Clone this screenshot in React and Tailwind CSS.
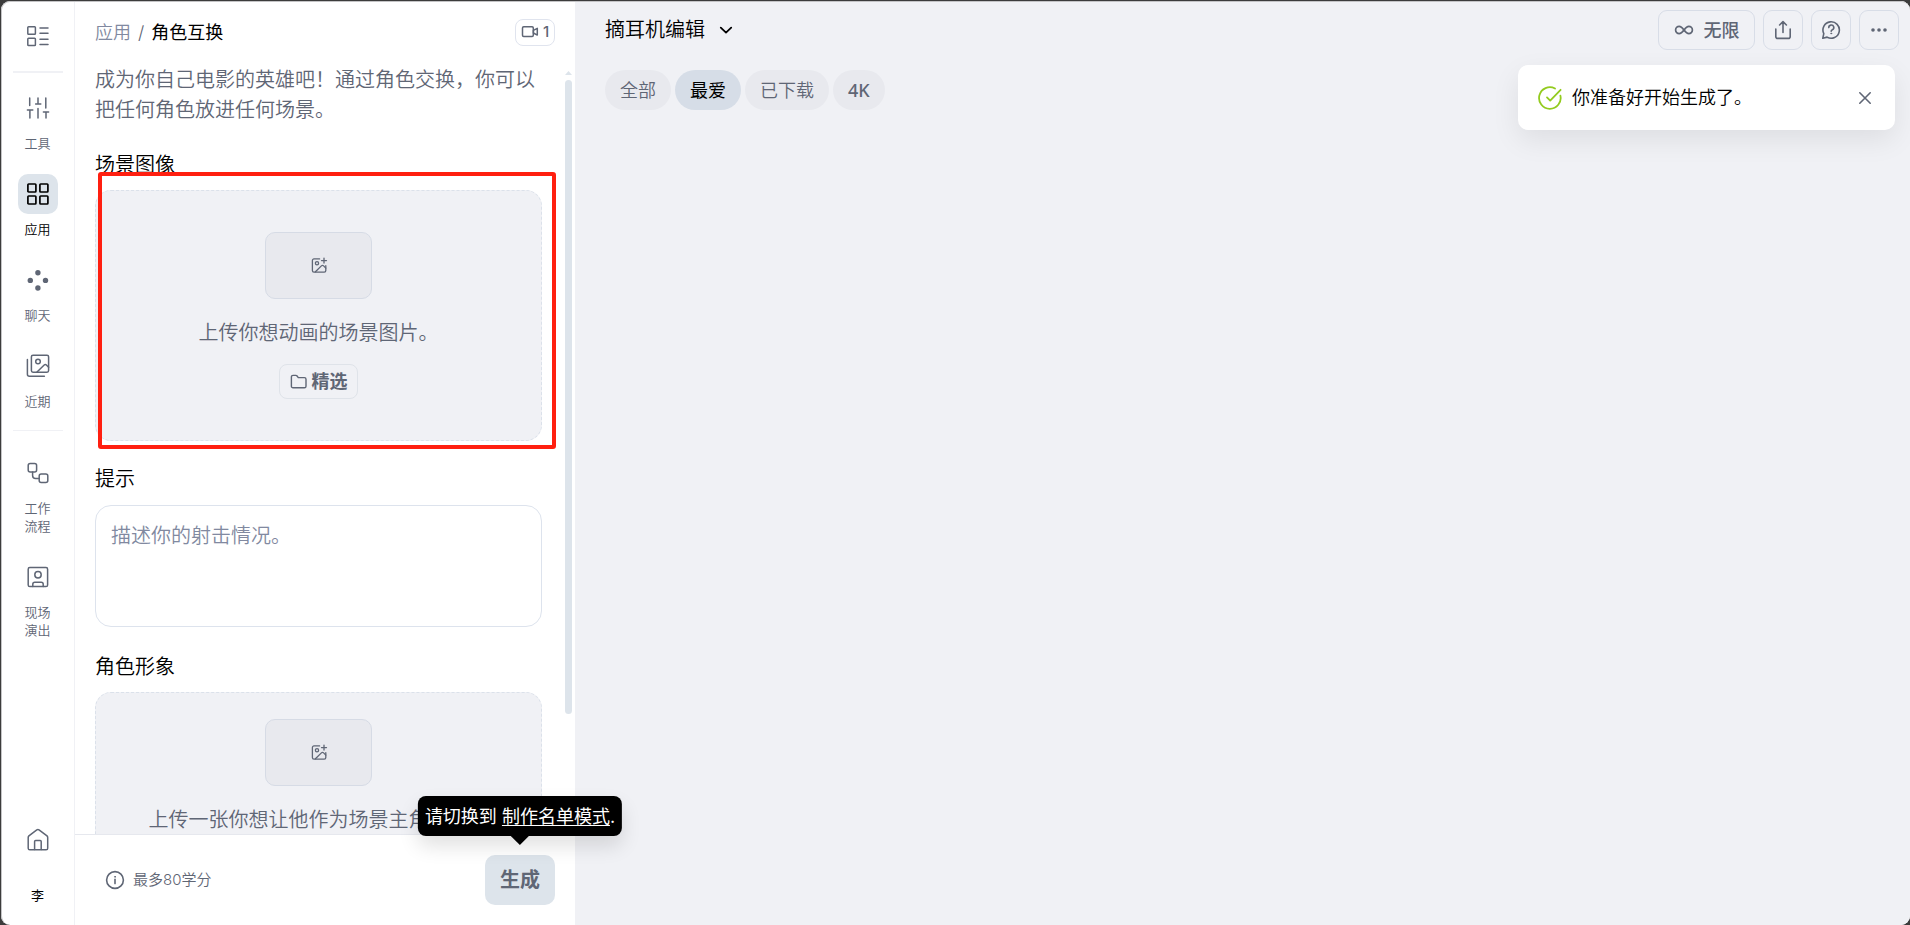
import React from "react";

function Icon({ size = 24, stroke = 1.5, className = "", children }) {
  return (
    <svg
      aria-hidden="true"
      width={size}
      height={size}
      viewBox={`0 0 ${size} ${size}`}
      fill="none"
      stroke="currentColor"
      strokeWidth={stroke}
      strokeLinecap="round"
      strokeLinejoin="round"
      className={`shrink-0 ${className}`}
    >
      {children}
    </svg>
  );
}

const ListIcon = () => (
  <Icon>
    <rect x="1.8" y="2.8" width="7.6" height="7.4" rx="0.8" />
    <rect x="1.8" y="14.2" width="7.6" height="7.4" rx="0.8" />
    <path d="M14 4h8M14 9.2h8M14 15.2h8M14 20.6h8" />
  </Icon>
);

const SlidersIcon = () => (
  <Icon>
    <path d="M3.7 2v7.6M12 2v5M19.8 2v10M9.6 8h5.2M1.4 14h5.4M3.9 14v8M12 12.6V22M17.4 16h5.2M20 16v6" />
  </Icon>
);

const AppsIcon = () => (
  <Icon stroke={1.7}>
    <rect x="1.9" y="2" width="8" height="8" rx="0.8" />
    <rect x="13.9" y="2" width="8" height="8" rx="0.8" />
    <rect x="1.9" y="14" width="8" height="8" rx="0.8" />
    <rect x="13.9" y="14" width="8" height="8" rx="0.8" />
  </Icon>
);

const ChatIcon = () => (
  <Icon stroke={0}>
    <g fill="currentColor">
      <circle cx="11.9" cy="4.8" r="2.7" />
      <circle cx="4.3" cy="12.4" r="2.7" />
      <circle cx="19.5" cy="12.4" r="2.7" />
      <circle cx="11.9" cy="20" r="2.7" />
    </g>
  </Icon>
);

const RecentIcon = () => (
  <Icon>
    <rect x="5.4" y="1.2" width="17.2" height="17" rx="1.6" />
    <circle cx="12" cy="7.5" r="2.3" />
    <path d="M11 18l7.2-7a1.6 1.6 0 0 1 2.2 0l2.2 2.2M1.4 5.6v14.6a2 2 0 0 0 2 2h15" />
  </Icon>
);

const WorkflowIcon = () => (
  <Icon>
    <rect x="2.2" y="2.4" width="8.4" height="8.6" rx="2" />
    <rect x="13.2" y="13" width="8.6" height="8.6" rx="2" />
    <path d="M6.6 11v3.6a3 3 0 0 0 3 3h3.6" />
  </Icon>
);

const LiveIcon = () => (
  <Icon>
    <rect x="2.2" y="2.6" width="19.4" height="19" rx="1.6" />
    <circle cx="12" cy="9.8" r="3.2" />
    <path d="M6.8 21.4v-2.2a2 2 0 0 1 2-2h6.4a2 2 0 0 1 2 2v2.2" />
  </Icon>
);

const HomeIcon = () => (
  <Icon>
    <path d="M2.2 9.4c0-.6.3-1.1.7-1.5l7.9-6a1.9 1.9 0 0 1 2.2 0l8 6c.4.4.7.9.7 1.5v10.8a1.6 1.6 0 0 1-1.6 1.6H3.8a1.6 1.6 0 0 1-1.6-1.6z" />
    <path d="M8.6 21.6v-8.2a1 1 0 0 1 1-1h4.6a1 1 0 0 1 1 1v8.2" />
  </Icon>
);

const VideoIcon = () => (
  <Icon size={18}>
    <rect x="1.5" y="3.8" width="10.8" height="9.6" rx="1.2" />
    <path d="M12.4 7.4l3.9-2.1v6.8l-3.9-2.1z" />
  </Icon>
);

const ImagePlusIcon = () => (
  <Icon size={18} stroke={1.3}>
    <path d="M9.6 1.9H4A1.6 1.6 0 0 0 2.4 3.5v10a1.6 1.6 0 0 0 1.6 1.6h10.2a1.6 1.6 0 0 0 1.6-1.6V8.7" />
    <circle cx="7" cy="6.2" r="1.6" />
    <path d="M5.4 14.7l6-5.8a1.6 1.6 0 0 1 2.2 0l2.2 2.2M14 1.1v5M11.5 3.6h5" />
  </Icon>
);

const FolderIcon = () => (
  <Icon size={18} stroke={1.4}>
    <path d="M1.4 4a1.6 1.6 0 0 1 1.6-1.6h2.8c.5 0 1 .2 1.3.6l1.2 1.6h6.1A1.6 1.6 0 0 1 16 6.2v7a1.6 1.6 0 0 1-1.6 1.6H3a1.6 1.6 0 0 1-1.6-1.6z" />
  </Icon>
);

const InfoIcon = () => (
  <Icon size={20} stroke={1.6}>
    <circle cx="10" cy="10" r="8.4" />
    <path d="M10 9.4v4.2" />
    <circle cx="10" cy="6.8" r="0.5" fill="currentColor" strokeWidth="0.8" />
  </Icon>
);

const InfinityIcon = () => (
  <Icon size={20} stroke={1.7}>
    <path d="M10 10C8.2 7.6 7 6.4 5.2 6.4a3.6 3.6 0 0 0 0 7.2C7 13.6 8.2 12.4 10 10s3-3.6 4.8-3.6a3.6 3.6 0 0 1 0 7.2C13 13.6 11.8 12.4 10 10z" />
  </Icon>
);

const ShareIcon = () => (
  <Icon size={20} stroke={1.6}>
    <path d="M10 12.4V1.6M6.6 5L10 1.6 13.4 5M2.8 9v7.4a2 2 0 0 0 2 2h10.4a2 2 0 0 0 2-2V9" />
  </Icon>
);

const HelpIcon = () => (
  <Icon size={20} stroke={1.6}>
    <path d="M1.8 18.2l1-4.6a8.2 8.2 0 1 1 3.3 3.5z" />
    <path d="M7.8 7.6a2.5 2.5 0 1 1 3.6 2.2c-.8.4-1.2.8-1.2 1.4" />
    <circle cx="10.2" cy="13.4" r="0.5" fill="currentColor" strokeWidth="0.8" />
  </Icon>
);

const DotsIcon = () => (
  <Icon size={20} stroke={0}>
    <g fill="currentColor">
      <circle cx="4" cy="10" r="1.8" />
      <circle cx="10" cy="10" r="1.8" />
      <circle cx="16" cy="10" r="1.8" />
    </g>
  </Icon>
);

const SuccessIcon = () => (
  <Icon className="text-[#93cb1f]" stroke={1.8}>
    <path d="M22.4 9.6A10.8 10.8 0 1 1 17 2.5" />
    <path d="M9 11.4l3.2 3.2L22.6 3.8" />
  </Icon>
);

const CloseIcon = () => (
  <Icon size={16} stroke={1.6}>
    <path d="M2.8 2.8l10.4 10.4M13.2 2.8L2.8 13.2" />
  </Icon>
);

const ChevronIcon = () => (
  <Icon size={16} stroke={1.8}>
    <path d="M2.8 5.6L8 10.6l5.2-5" />
  </Icon>
);

function NavItem({ icon, label, active }) {
  return (
    <a
      href="#"
      className={`flex flex-col items-center gap-[6px] text-[13px] leading-[18px] ${active ? "text-black" : "text-[#5f6675]"}`}
    >
      <span className={`flex size-10 items-center justify-center rounded-[10px] ${active ? "bg-[#dde4eb]" : ""}`}>
        {icon}
      </span>
      <span className="w-7 text-center">{label}</span>
    </a>
  );
}

function Sidebar() {
  return (
    <nav className="flex w-[74px] shrink-0 flex-col items-center border-r border-[#f0f1f5] pt-[15px] text-[#5f6675]">
      <button type="button" aria-label="菜单" className="flex size-10 items-center justify-center">
        <ListIcon />
      </button>
      <hr className="my-[15px] w-[50px] border-t-2 border-[#f0f1f5]" />
      <div className="flex flex-col gap-[22px]">
        <NavItem icon={<SlidersIcon />} label="工具" />
        <NavItem icon={<AppsIcon />} label="应用" active />
        <NavItem icon={<ChatIcon />} label="聊天" />
        <NavItem icon={<RecentIcon />} label="近期" />
      </div>
      <hr className="mt-5 mb-[22px] w-[50px] border-[#f0f1f5]" />
      <div className="flex flex-col gap-[22px]">
        <NavItem icon={<WorkflowIcon />} label="工作流程" />
        <NavItem icon={<LiveIcon />} label="现场演出" />
      </div>
      <a href="#" aria-label="主页" className="mt-auto flex size-10 items-center justify-center">
        <HomeIcon />
      </a>
      <button type="button" className="mt-[26px] mb-[21px] text-[13px] leading-[18px] font-normal text-black">
        李
      </button>
    </nav>
  );
}

function ImageTile() {
  return (
    <span className="flex h-[67px] w-[107px] shrink-0 items-center justify-center rounded-[10px] border border-[#d6dbe5] bg-[#e8e9ee]">
      <ImagePlusIcon />
    </span>
  );
}

function Panel() {
  return (
    <section className="relative flex w-[500px] shrink-0 flex-col">
      <header className="flex h-[62px] shrink-0 items-center justify-between px-5 text-[18px]">
        <div className="flex items-center gap-[7px]">
          <a href="#" className="text-[#8189a0]">应用</a>
          <span className="text-[#5f6675]">/</span>
          <span className="font-normal text-black">角色互换</span>
        </div>
        <span className="flex h-[27px] w-10 items-center justify-center gap-1 rounded-lg border border-[#e0e4ee] text-[15px] font-medium text-[#5f6675]">
          <VideoIcon />1
        </span>
      </header>

      <div className="flex min-h-0 flex-1">
        <div className="min-w-0 flex-1 overflow-hidden pr-[23px] pl-5 text-[20px] leading-[30px]">
          <p className="mt-[2px] text-[#5f6675]">成为你自己电影的英雄吧！通过角色交换，你可以把任何角色放进任何场景。</p>

          <h2 className="mt-[25px] text-black">场景图像</h2>
          <div className="relative mt-[10px]">
            <div className="flex h-[251px] flex-col items-center justify-center rounded-2xl border border-dashed border-[#dbe1ea] bg-[#f0f1f5] text-[#5f6675]">
              <ImageTile />
              <p className="mt-[19px]">上传你想动画的场景图片。</p>
              <button
                type="button"
                className="mt-4 flex h-[35px] w-[79px] items-center justify-center gap-1 rounded-lg border border-[#dfe3e9] text-[18px] font-bold"
              >
                <FolderIcon />
                精选
              </button>
            </div>
            <div className="pointer-events-none absolute -top-[18px] -right-[14px] -bottom-2 left-[3px] rounded-[3px] border-4 border-[#ff1f10]" />
          </div>

          <label htmlFor="prompt" className="mt-[23px] block text-black">提示</label>
          <textarea
            id="prompt"
            placeholder="描述你的射击情况。"
            className="mt-[11px] block h-[122px] w-full resize-none rounded-2xl border border-[#dde3ed] bg-white px-[15px] py-[15px] text-black outline-none placeholder:text-[#8189a0]"
          />

          <h2 className="mt-[25px] text-black">角色形象</h2>
          <div className="mt-[10px] flex h-[251px] flex-col items-center rounded-2xl border border-dashed border-[#dbe1ea] bg-[#f0f1f5] pt-[26px] text-[#5f6675]">
            <ImageTile />
            <p className="mt-[19px]">上传一张你想让他作为场景主角的图。</p>
          </div>
        </div>
        <div aria-hidden="true" className="mr-[3px] w-[7px] pt-[8px]">
          <svg width="7" height="4" viewBox="0 0 7 4" className="block">
            <path d="M3.5 0L7 4H0z" fill="#dde4eb" />
          </svg>
          <div className="mt-[5px] h-[634px] rounded-full bg-[#dde4eb]" />
        </div>
      </div>

      <footer className="flex h-[91px] shrink-0 items-center justify-between border-t border-[#e6e8ee] pr-5 pl-[30px] text-[#5f6675]">
        <span className="flex items-center gap-2 text-[15px]">
          <InfoIcon />
          最多80学分
        </span>
        <div className="relative">
          <button type="button" className="block h-[50px] w-[70px] rounded-[10px] bg-[#dde4eb] text-[20px] font-bold">
            生成
          </button>
          <div
            role="tooltip"
            className="absolute bottom-[69px] left-1/2 z-10 flex h-10 -translate-x-1/2 items-center justify-center rounded-lg bg-black px-[7px] text-[18px] font-normal whitespace-pre text-white shadow-[0_10px_20px_rgba(0,0,0,0.12)]"
          >
            <span>请切换到 <a href="#" className="underline underline-offset-2">制作名单模式</a>.</span>
            <svg aria-hidden="true" width="20" height="10" viewBox="0 0 20 10" className="absolute top-full left-1/2 -mt-px -translate-x-1/2">
              <path d="M0 0H20L10 10z" fill="#000" />
            </svg>
          </div>
        </div>
      </footer>
    </section>
  );
}

function Pill({ children, active }) {
  return (
    <button
      type="button"
      aria-pressed={!!active}
      className={`h-10 rounded-full px-[15px] text-[18px] ${active ? "bg-[#d6dde7] font-normal text-black" : "bg-[#e8e9ee] text-[#5f6675]"}`}
    >
      {children}
    </button>
  );
}

function SquareButton({ label, children }) {
  return (
    <button
      type="button"
      aria-label={label}
      className="flex size-10 items-center justify-center rounded-[9px] border border-[#d8dde7]"
    >
      {children}
    </button>
  );
}

function Workspace() {
  return (
    <main className="relative min-w-0 flex-1 bg-[#f0f1f5] pl-[30px]">
      <header className="flex items-start justify-between pt-[9px] pr-[11px]">
        <button type="button" className="flex h-10 items-center gap-[13px] text-[20px] text-black">
          摘耳机编辑
          <ChevronIcon />
        </button>
        <div className="flex gap-2 text-[#5f6675]">
          <button
            type="button"
            className="flex h-10 w-[97px] items-center justify-center gap-[10px] rounded-[9px] border border-[#d8dde7] text-[18px] font-medium"
          >
            <InfinityIcon />
            无限
          </button>
          <SquareButton label="分享"><ShareIcon /></SquareButton>
          <SquareButton label="帮助"><HelpIcon /></SquareButton>
          <SquareButton label="更多"><DotsIcon /></SquareButton>
        </div>
      </header>
      <div className="mt-5 flex gap-1">
        <Pill>全部</Pill>
        <Pill active>最爱</Pill>
        <Pill>已下载</Pill>
        <Pill><span className="font-['Noto_Sans'] font-medium">4K</span></Pill>
      </div>
      <div
        role="status"
        className="absolute top-16 right-[15px] flex h-[65px] w-[377px] items-center rounded-[10px] bg-white pr-[22px] pl-5 shadow-[0_10px_28px_rgba(0,0,0,0.08)]"
      >
        <SuccessIcon />
        <span className="ml-[10px] text-[18px] text-black">你准备好开始生成了。</span>
        <button type="button" aria-label="关闭" className="ml-auto text-[#5f6675]">
          <CloseIcon />
        </button>
      </div>
    </main>
  );
}

export default function App() {
  return (
    <div className="relative h-screen bg-[#3c3c3c] pt-px pl-px font-['Inter','Noto_Sans_CJK_SC',sans-serif] font-[350]">
      <div className="flex h-full overflow-hidden rounded-[9px] bg-white">
        <Sidebar />
        <Panel />
        <Workspace />
      </div>
      <div className="pointer-events-none absolute top-px right-0 bottom-0 left-px rounded-[9px] border-t border-l border-[#c4c4c6]" />
    </div>
  );
}
